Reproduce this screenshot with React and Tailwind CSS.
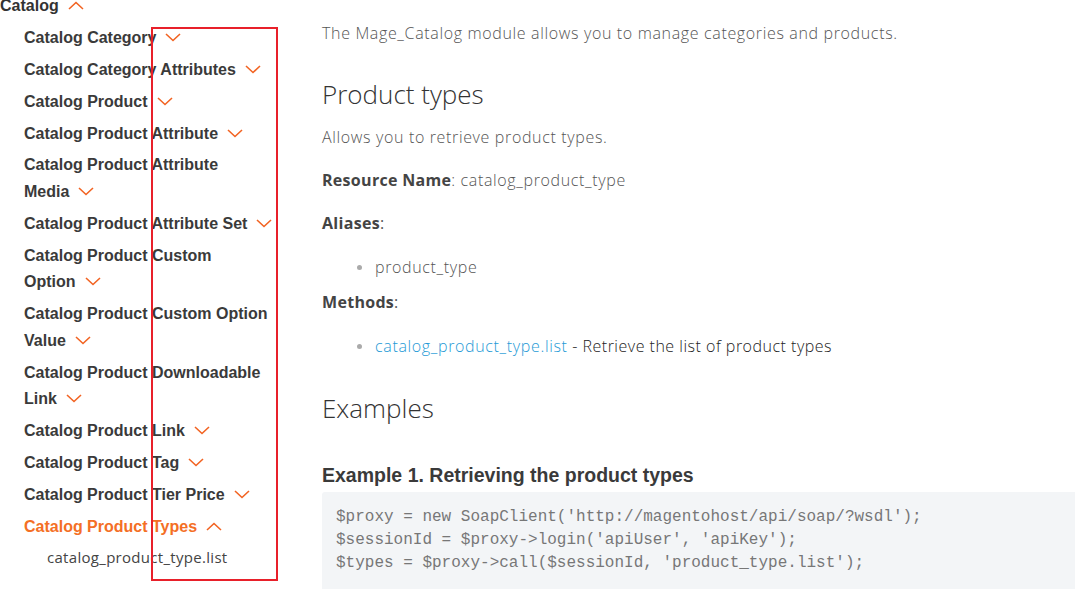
import React from 'react';

const ITEMS = [
  'Catalog Category',
  'Catalog Category Attributes',
  'Catalog Product',
  'Catalog Product Attribute',
  'Catalog Product Attribute Media',
  'Catalog Product Attribute Set',
  'Catalog Product Custom Option',
  'Catalog Product Custom Option Value',
  'Catalog Product Downloadable Link',
  'Catalog Product Link',
  'Catalog Product Tag',
  'Catalog Product Tier Price',
];

function Chevron({ up }) {
  return (
    <svg width="16" height="9" viewBox="0 0 16 9" className="inline-block ml-[9px] align-[1px]" fill="none">
      <polyline
        points={up ? '1,8 8,1.5 15,8' : '1,1 8,7.5 15,1'}
        stroke="#f26322"
        strokeWidth="1.6"
      />
    </svg>
  );
}

// last word stays glued to the chevron, like the ::after arrow on the docs site
function Label({ text, up }) {
  const i = text.lastIndexOf(' ');
  return (
    <>
      {text.slice(0, i + 1)}
      <span className="whitespace-nowrap">{text.slice(i + 1)}<Chevron up={up} /></span>
    </>
  );
}

function Sidebar() {
  return (
    <nav className="w-[322px] shrink-0 pr-[44px]">
      <div className="mt-[-7px] text-[16px] leading-[26.5px] font-bold text-[#333]">
        Catalog<Chevron up />
      </div>
      <ul className="pl-[24px] mt-[5.4px]">
        {ITEMS.map(label => (
          <li key={label} className="text-[16px] leading-[26.5px] font-bold text-[#3a3a3a] mb-[5.4px]">
            <Label text={label} />
          </li>
        ))}
        <li className="text-[16px] leading-[26.5px] font-bold text-[#f46f25]">
          <Label text="Catalog Product Types" up />
          <ul className="pl-[23px] mt-[4px]">
            <li className="font-['Open_Sans',sans-serif] font-normal text-[#444] text-[15px] tracking-[0.3px]">catalog_product_type.list</li>
          </ul>
        </li>
      </ul>
    </nav>
  );
}

function Bullet({ children }) {
  return (
    <li className="flex items-center">
      <span className="w-[5px] h-[5px] rounded-full bg-[#aaa] ml-[35px] mr-[13px]" />
      <span>{children}</span>
    </li>
  );
}

export default function App() {
  return (
    <div className="relative w-[1075px] h-[589px] overflow-hidden bg-white font-['Liberation_Sans',Arial,sans-serif]">
      <div className="flex">
        <Sidebar />

        <main className="flex-1 min-w-0 font-['Open_Sans',sans-serif] text-[16px] leading-[24px] text-[#555] tracking-[0.65px]">
          <h1 className="mt-[-42px] font-['Liberation_Sans',Arial,sans-serif] text-[37px] leading-[44px] font-light text-[#f46f25] tracking-[-0.3px]">
            Module: Mage_Catalog
          </h1>
          <p className="mt-[19px] font-light text-[#555]">The Mage_Catalog module allows you to manage categories and products.</p>

          <h2 className="mt-[32px] text-[26px] leading-[34px] font-light text-[#333] tracking-normal">Product types</h2>
          <p className="mt-[14px] font-light text-[#555]">Allows you to retrieve product types.</p>

          <p className="mt-[19px] font-light"><b className="font-bold text-[#444] tracking-[0.3px]">Resource Name</b>: catalog_product_type</p>
          <p className="mt-[19px]"><b className="font-bold text-[#444] tracking-[0.3px]">Aliases</b>:</p>
          <ul className="mt-[20px] font-light">
            <Bullet>product_type</Bullet>
          </ul>
          <p className="mt-[11px]"><b className="font-bold text-[#444] tracking-[0.3px]">Methods</b>:</p>
          <ul className="mt-[20px]">
            <Bullet>
              <span className="font-light text-[#1f9ad6]">catalog_product_type.list</span>
              <span className="font-light text-[#222] tracking-[0.5px]"> - Retrieve the list of product types</span>
            </Bullet>
          </ul>

          <h2 className="mt-[33px] text-[26px] leading-[34px] font-light text-[#333] tracking-normal">Examples</h2>
          <h3 className="mt-[38px] font-['Liberation_Sans',Arial,sans-serif] text-[19.5px] leading-[24px] font-bold text-[#3a3a3a] tracking-normal">
            Example 1. Retrieving the product types
          </h3>
          <pre className="mt-[5px] bg-[#f3f5f7] rounded-tl-[3px] pl-[14px] pt-[14px] pb-[40px] font-['Liberation_Mono','Courier_New',monospace] text-[16px] leading-[23px] text-[#777] tracking-normal">
{`$proxy = new SoapClient('http://magentohost/api/soap/?wsdl');
$sessionId = $proxy->login('apiUser', 'apiKey');
$types = $proxy->call($sessionId, 'product_type.list');`}
          </pre>
        </main>
      </div>

      <div className="absolute left-[151px] top-[27px] w-[127px] h-[554px] border-2 border-[#e8202a] pointer-events-none" />
    </div>
  );
}
